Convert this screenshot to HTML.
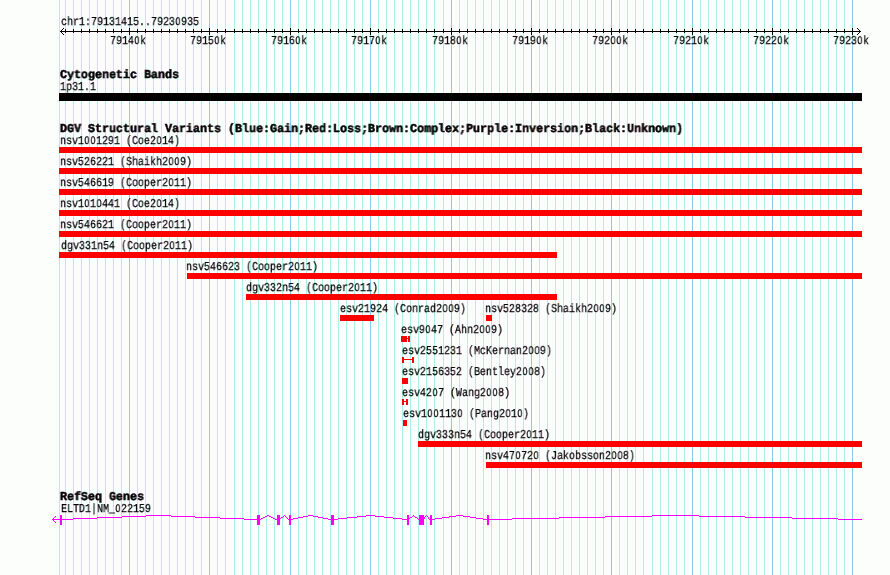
<!DOCTYPE html><html><head><meta charset="utf-8"><style>
html,body{margin:0;padding:0;width:890px;height:575px;overflow:hidden;background:#fcfefc}
svg{position:absolute;left:0;top:0}
.t{position:absolute;white-space:pre;font-family:'Liberation Mono',monospace;font-size:12px;line-height:13px;text-rendering:geometricPrecision;transform:scaleX(0.833333);transform-origin:0 0;color:#000;will-change:transform;-webkit-text-stroke:0.25px #000}
.b{position:absolute;white-space:pre;font-family:'Liberation Mono',monospace;font-weight:bold;font-size:12px;line-height:13px;text-rendering:geometricPrecision;transform:scaleX(0.972222);transform-origin:0 0;color:#000;will-change:transform;-webkit-text-stroke:0.5px #000}
.z{display:inline-block;width:7.2px;text-align:center;font-family:'Liberation Sans',sans-serif;font-size:11px;-webkit-text-stroke:0.2px #000}
</style></head><body>
<svg width="890" height="575" shape-rendering="crispEdges">
<rect x="59" y="0" width="1" height="575" fill="#afeeee"/>
<rect x="65" y="0" width="1" height="575" fill="#afeeee"/>
<rect x="73" y="0" width="1" height="575" fill="#afeeee"/>
<rect x="81" y="0" width="1" height="575" fill="#afeeee"/>
<rect x="89" y="0" width="1" height="575" fill="#afeeee"/>
<rect x="97" y="0" width="1" height="575" fill="#afeeee"/>
<rect x="105" y="0" width="1" height="575" fill="#afeeee"/>
<rect x="113" y="0" width="1" height="575" fill="#afeeee"/>
<rect x="121" y="0" width="1" height="575" fill="#afeeee"/>
<rect x="129" y="0" width="1" height="575" fill="#87ceeb"/>
<rect x="137" y="0" width="1" height="575" fill="#afeeee"/>
<rect x="145" y="0" width="1" height="575" fill="#afeeee"/>
<rect x="153" y="0" width="1" height="575" fill="#afeeee"/>
<rect x="161" y="0" width="1" height="575" fill="#afeeee"/>
<rect x="169" y="0" width="1" height="575" fill="#afeeee"/>
<rect x="177" y="0" width="1" height="575" fill="#afeeee"/>
<rect x="185" y="0" width="1" height="575" fill="#afeeee"/>
<rect x="193" y="0" width="1" height="575" fill="#afeeee"/>
<rect x="201" y="0" width="1" height="575" fill="#afeeee"/>
<rect x="209" y="0" width="1" height="575" fill="#87ceeb"/>
<rect x="217" y="0" width="1" height="575" fill="#afeeee"/>
<rect x="225" y="0" width="1" height="575" fill="#afeeee"/>
<rect x="234" y="0" width="1" height="575" fill="#afeeee"/>
<rect x="242" y="0" width="1" height="575" fill="#afeeee"/>
<rect x="250" y="0" width="1" height="575" fill="#afeeee"/>
<rect x="258" y="0" width="1" height="575" fill="#afeeee"/>
<rect x="266" y="0" width="1" height="575" fill="#afeeee"/>
<rect x="274" y="0" width="1" height="575" fill="#afeeee"/>
<rect x="282" y="0" width="1" height="575" fill="#afeeee"/>
<rect x="290" y="0" width="1" height="575" fill="#87ceeb"/>
<rect x="298" y="0" width="1" height="575" fill="#afeeee"/>
<rect x="306" y="0" width="1" height="575" fill="#afeeee"/>
<rect x="314" y="0" width="1" height="575" fill="#afeeee"/>
<rect x="322" y="0" width="1" height="575" fill="#afeeee"/>
<rect x="330" y="0" width="1" height="575" fill="#afeeee"/>
<rect x="338" y="0" width="1" height="575" fill="#afeeee"/>
<rect x="346" y="0" width="1" height="575" fill="#afeeee"/>
<rect x="354" y="0" width="1" height="575" fill="#afeeee"/>
<rect x="362" y="0" width="1" height="575" fill="#afeeee"/>
<rect x="370" y="0" width="1" height="575" fill="#87ceeb"/>
<rect x="378" y="0" width="1" height="575" fill="#afeeee"/>
<rect x="386" y="0" width="1" height="575" fill="#afeeee"/>
<rect x="394" y="0" width="1" height="575" fill="#afeeee"/>
<rect x="402" y="0" width="1" height="575" fill="#afeeee"/>
<rect x="410" y="0" width="1" height="575" fill="#afeeee"/>
<rect x="418" y="0" width="1" height="575" fill="#afeeee"/>
<rect x="426" y="0" width="1" height="575" fill="#afeeee"/>
<rect x="434" y="0" width="1" height="575" fill="#afeeee"/>
<rect x="443" y="0" width="1" height="575" fill="#afeeee"/>
<rect x="451" y="0" width="1" height="575" fill="#87ceeb"/>
<rect x="459" y="0" width="1" height="575" fill="#afeeee"/>
<rect x="467" y="0" width="1" height="575" fill="#afeeee"/>
<rect x="475" y="0" width="1" height="575" fill="#afeeee"/>
<rect x="483" y="0" width="1" height="575" fill="#afeeee"/>
<rect x="491" y="0" width="1" height="575" fill="#afeeee"/>
<rect x="499" y="0" width="1" height="575" fill="#afeeee"/>
<rect x="507" y="0" width="1" height="575" fill="#afeeee"/>
<rect x="515" y="0" width="1" height="575" fill="#afeeee"/>
<rect x="523" y="0" width="1" height="575" fill="#afeeee"/>
<rect x="531" y="0" width="1" height="575" fill="#87ceeb"/>
<rect x="539" y="0" width="1" height="575" fill="#afeeee"/>
<rect x="547" y="0" width="1" height="575" fill="#afeeee"/>
<rect x="555" y="0" width="1" height="575" fill="#afeeee"/>
<rect x="563" y="0" width="1" height="575" fill="#afeeee"/>
<rect x="571" y="0" width="1" height="575" fill="#afeeee"/>
<rect x="579" y="0" width="1" height="575" fill="#afeeee"/>
<rect x="587" y="0" width="1" height="575" fill="#afeeee"/>
<rect x="595" y="0" width="1" height="575" fill="#afeeee"/>
<rect x="603" y="0" width="1" height="575" fill="#afeeee"/>
<rect x="611" y="0" width="1" height="575" fill="#87ceeb"/>
<rect x="619" y="0" width="1" height="575" fill="#afeeee"/>
<rect x="627" y="0" width="1" height="575" fill="#afeeee"/>
<rect x="635" y="0" width="1" height="575" fill="#afeeee"/>
<rect x="643" y="0" width="1" height="575" fill="#afeeee"/>
<rect x="652" y="0" width="1" height="575" fill="#afeeee"/>
<rect x="660" y="0" width="1" height="575" fill="#afeeee"/>
<rect x="668" y="0" width="1" height="575" fill="#afeeee"/>
<rect x="676" y="0" width="1" height="575" fill="#afeeee"/>
<rect x="684" y="0" width="1" height="575" fill="#afeeee"/>
<rect x="692" y="0" width="1" height="575" fill="#87ceeb"/>
<rect x="700" y="0" width="1" height="575" fill="#afeeee"/>
<rect x="708" y="0" width="1" height="575" fill="#afeeee"/>
<rect x="716" y="0" width="1" height="575" fill="#afeeee"/>
<rect x="724" y="0" width="1" height="575" fill="#afeeee"/>
<rect x="732" y="0" width="1" height="575" fill="#afeeee"/>
<rect x="740" y="0" width="1" height="575" fill="#afeeee"/>
<rect x="748" y="0" width="1" height="575" fill="#afeeee"/>
<rect x="756" y="0" width="1" height="575" fill="#afeeee"/>
<rect x="764" y="0" width="1" height="575" fill="#afeeee"/>
<rect x="772" y="0" width="1" height="575" fill="#87ceeb"/>
<rect x="780" y="0" width="1" height="575" fill="#afeeee"/>
<rect x="788" y="0" width="1" height="575" fill="#afeeee"/>
<rect x="796" y="0" width="1" height="575" fill="#afeeee"/>
<rect x="804" y="0" width="1" height="575" fill="#afeeee"/>
<rect x="812" y="0" width="1" height="575" fill="#afeeee"/>
<rect x="820" y="0" width="1" height="575" fill="#afeeee"/>
<rect x="828" y="0" width="1" height="575" fill="#afeeee"/>
<rect x="836" y="0" width="1" height="575" fill="#afeeee"/>
<rect x="844" y="0" width="1" height="575" fill="#afeeee"/>
<rect x="852" y="0" width="1" height="575" fill="#87ceeb"/>
<rect x="60" y="31" width="801" height="1" fill="#000"/>
<rect x="61" y="30" width="1" height="3" fill="#000"/>
<rect x="62" y="29" width="1" height="1" fill="#000"/>
<rect x="62" y="33" width="1" height="1" fill="#000"/>
<rect x="63" y="28" width="1" height="1" fill="#000"/>
<rect x="63" y="34" width="1" height="1" fill="#000"/>
<rect x="859" y="30" width="1" height="3" fill="#000"/>
<rect x="858" y="29" width="1" height="1" fill="#000"/>
<rect x="858" y="33" width="1" height="1" fill="#000"/>
<rect x="857" y="28" width="1" height="1" fill="#000"/>
<rect x="857" y="34" width="1" height="1" fill="#000"/>
<rect x="65" y="29" width="1" height="4" fill="#000"/>
<rect x="73" y="29" width="1" height="4" fill="#000"/>
<rect x="81" y="29" width="1" height="4" fill="#000"/>
<rect x="89" y="29" width="1" height="4" fill="#000"/>
<rect x="97" y="29" width="1" height="4" fill="#000"/>
<rect x="105" y="29" width="1" height="4" fill="#000"/>
<rect x="113" y="29" width="1" height="4" fill="#000"/>
<rect x="121" y="29" width="1" height="4" fill="#000"/>
<rect x="129" y="28" width="1" height="7" fill="#000"/>
<rect x="137" y="29" width="1" height="4" fill="#000"/>
<rect x="145" y="29" width="1" height="4" fill="#000"/>
<rect x="153" y="29" width="1" height="4" fill="#000"/>
<rect x="161" y="29" width="1" height="4" fill="#000"/>
<rect x="169" y="29" width="1" height="4" fill="#000"/>
<rect x="177" y="29" width="1" height="4" fill="#000"/>
<rect x="185" y="29" width="1" height="4" fill="#000"/>
<rect x="193" y="29" width="1" height="4" fill="#000"/>
<rect x="201" y="29" width="1" height="4" fill="#000"/>
<rect x="209" y="28" width="1" height="7" fill="#000"/>
<rect x="217" y="29" width="1" height="4" fill="#000"/>
<rect x="225" y="29" width="1" height="4" fill="#000"/>
<rect x="234" y="29" width="1" height="4" fill="#000"/>
<rect x="242" y="29" width="1" height="4" fill="#000"/>
<rect x="250" y="29" width="1" height="4" fill="#000"/>
<rect x="258" y="29" width="1" height="4" fill="#000"/>
<rect x="266" y="29" width="1" height="4" fill="#000"/>
<rect x="274" y="29" width="1" height="4" fill="#000"/>
<rect x="282" y="29" width="1" height="4" fill="#000"/>
<rect x="290" y="28" width="1" height="7" fill="#000"/>
<rect x="298" y="29" width="1" height="4" fill="#000"/>
<rect x="306" y="29" width="1" height="4" fill="#000"/>
<rect x="314" y="29" width="1" height="4" fill="#000"/>
<rect x="322" y="29" width="1" height="4" fill="#000"/>
<rect x="330" y="29" width="1" height="4" fill="#000"/>
<rect x="338" y="29" width="1" height="4" fill="#000"/>
<rect x="346" y="29" width="1" height="4" fill="#000"/>
<rect x="354" y="29" width="1" height="4" fill="#000"/>
<rect x="362" y="29" width="1" height="4" fill="#000"/>
<rect x="370" y="28" width="1" height="7" fill="#000"/>
<rect x="378" y="29" width="1" height="4" fill="#000"/>
<rect x="386" y="29" width="1" height="4" fill="#000"/>
<rect x="394" y="29" width="1" height="4" fill="#000"/>
<rect x="402" y="29" width="1" height="4" fill="#000"/>
<rect x="410" y="29" width="1" height="4" fill="#000"/>
<rect x="418" y="29" width="1" height="4" fill="#000"/>
<rect x="426" y="29" width="1" height="4" fill="#000"/>
<rect x="434" y="29" width="1" height="4" fill="#000"/>
<rect x="443" y="29" width="1" height="4" fill="#000"/>
<rect x="451" y="28" width="1" height="7" fill="#000"/>
<rect x="459" y="29" width="1" height="4" fill="#000"/>
<rect x="467" y="29" width="1" height="4" fill="#000"/>
<rect x="475" y="29" width="1" height="4" fill="#000"/>
<rect x="483" y="29" width="1" height="4" fill="#000"/>
<rect x="491" y="29" width="1" height="4" fill="#000"/>
<rect x="499" y="29" width="1" height="4" fill="#000"/>
<rect x="507" y="29" width="1" height="4" fill="#000"/>
<rect x="515" y="29" width="1" height="4" fill="#000"/>
<rect x="523" y="29" width="1" height="4" fill="#000"/>
<rect x="531" y="28" width="1" height="7" fill="#000"/>
<rect x="539" y="29" width="1" height="4" fill="#000"/>
<rect x="547" y="29" width="1" height="4" fill="#000"/>
<rect x="555" y="29" width="1" height="4" fill="#000"/>
<rect x="563" y="29" width="1" height="4" fill="#000"/>
<rect x="571" y="29" width="1" height="4" fill="#000"/>
<rect x="579" y="29" width="1" height="4" fill="#000"/>
<rect x="587" y="29" width="1" height="4" fill="#000"/>
<rect x="595" y="29" width="1" height="4" fill="#000"/>
<rect x="603" y="29" width="1" height="4" fill="#000"/>
<rect x="611" y="28" width="1" height="7" fill="#000"/>
<rect x="619" y="29" width="1" height="4" fill="#000"/>
<rect x="627" y="29" width="1" height="4" fill="#000"/>
<rect x="635" y="29" width="1" height="4" fill="#000"/>
<rect x="643" y="29" width="1" height="4" fill="#000"/>
<rect x="652" y="29" width="1" height="4" fill="#000"/>
<rect x="660" y="29" width="1" height="4" fill="#000"/>
<rect x="668" y="29" width="1" height="4" fill="#000"/>
<rect x="676" y="29" width="1" height="4" fill="#000"/>
<rect x="684" y="29" width="1" height="4" fill="#000"/>
<rect x="692" y="28" width="1" height="7" fill="#000"/>
<rect x="700" y="29" width="1" height="4" fill="#000"/>
<rect x="708" y="29" width="1" height="4" fill="#000"/>
<rect x="716" y="29" width="1" height="4" fill="#000"/>
<rect x="724" y="29" width="1" height="4" fill="#000"/>
<rect x="732" y="29" width="1" height="4" fill="#000"/>
<rect x="740" y="29" width="1" height="4" fill="#000"/>
<rect x="748" y="29" width="1" height="4" fill="#000"/>
<rect x="756" y="29" width="1" height="4" fill="#000"/>
<rect x="764" y="29" width="1" height="4" fill="#000"/>
<rect x="772" y="28" width="1" height="7" fill="#000"/>
<rect x="780" y="29" width="1" height="4" fill="#000"/>
<rect x="788" y="29" width="1" height="4" fill="#000"/>
<rect x="796" y="29" width="1" height="4" fill="#000"/>
<rect x="804" y="29" width="1" height="4" fill="#000"/>
<rect x="812" y="29" width="1" height="4" fill="#000"/>
<rect x="820" y="29" width="1" height="4" fill="#000"/>
<rect x="828" y="29" width="1" height="4" fill="#000"/>
<rect x="836" y="29" width="1" height="4" fill="#000"/>
<rect x="844" y="29" width="1" height="4" fill="#000"/>
<rect x="852" y="28" width="1" height="7" fill="#000"/>
<rect x="59" y="93" width="803" height="8" fill="#000"/>
<rect x="59" y="147" width="803" height="6" fill="#ff0000"/>
<rect x="59" y="168" width="803" height="6" fill="#ff0000"/>
<rect x="59" y="189" width="803" height="6" fill="#ff0000"/>
<rect x="59" y="210" width="803" height="6" fill="#ff0000"/>
<rect x="59" y="231" width="803" height="6" fill="#ff0000"/>
<rect x="59" y="252" width="498" height="6" fill="#ff0000"/>
<rect x="187" y="273" width="675" height="6" fill="#ff0000"/>
<rect x="246" y="294" width="311" height="6" fill="#ff0000"/>
<rect x="340" y="315" width="34" height="6" fill="#ff0000"/>
<rect x="486" y="315" width="6" height="6" fill="#ff0000"/>
<rect x="401" y="336" width="6" height="6" fill="#ff0000"/>
<rect x="407" y="338" width="1" height="1" fill="#ff0000"/>
<rect x="408" y="336" width="2" height="6" fill="#ff0000"/>
<rect x="402" y="357" width="2" height="6" fill="#ff0000"/>
<rect x="404" y="359" width="8" height="1" fill="#ff0000"/>
<rect x="412" y="357" width="2" height="6" fill="#ff0000"/>
<rect x="402" y="378" width="6" height="6" fill="#ff0000"/>
<rect x="402" y="399" width="2" height="6" fill="#ff0000"/>
<rect x="404" y="401" width="2" height="1" fill="#ff0000"/>
<rect x="406" y="399" width="2" height="6" fill="#ff0000"/>
<rect x="403" y="420" width="4" height="6" fill="#ff0000"/>
<rect x="418" y="441" width="444" height="6" fill="#ff0000"/>
<rect x="486" y="462" width="376" height="6" fill="#ff0000"/>
<rect x="52" y="519" width="8" height="1" fill="#ff00ff"/>
<rect x="53" y="518" width="1" height="3" fill="#ff00ff"/>
<rect x="54" y="517" width="1" height="1" fill="#ff00ff"/>
<rect x="54" y="521" width="1" height="1" fill="#ff00ff"/>
<rect x="55" y="516" width="1" height="1" fill="#ff00ff"/>
<rect x="55" y="522" width="1" height="1" fill="#ff00ff"/>
<rect x="60" y="519" width="13" height="1" fill="#ff00ff"/>
<rect x="244" y="519" width="13" height="1" fill="#ff00ff"/>
<rect x="259" y="519" width="2" height="1" fill="#ff00ff"/>
<rect x="275" y="519" width="2" height="1" fill="#ff00ff"/>
<rect x="279" y="519" width="1" height="1" fill="#ff00ff"/>
<rect x="288" y="519" width="1" height="1" fill="#ff00ff"/>
<rect x="290" y="519" width="3" height="1" fill="#ff00ff"/>
<rect x="328" y="519" width="3" height="1" fill="#ff00ff"/>
<rect x="333" y="519" width="5" height="1" fill="#ff00ff"/>
<rect x="402" y="519" width="5" height="1" fill="#ff00ff"/>
<rect x="408" y="519" width="1" height="1" fill="#ff00ff"/>
<rect x="418" y="519" width="1" height="1" fill="#ff00ff"/>
<rect x="423" y="519" width="1" height="1" fill="#ff00ff"/>
<rect x="429" y="519" width="1" height="1" fill="#ff00ff"/>
<rect x="431" y="519" width="4" height="1" fill="#ff00ff"/>
<rect x="483" y="519" width="4" height="1" fill="#ff00ff"/>
<rect x="488" y="519" width="24" height="1" fill="#ff00ff"/>
<rect x="838" y="519" width="24" height="1" fill="#ff00ff"/>
<rect x="73" y="518" width="24" height="1" fill="#ff00ff"/>
<rect x="220" y="518" width="24" height="1" fill="#ff00ff"/>
<rect x="261" y="518" width="2" height="1" fill="#ff00ff"/>
<rect x="273" y="518" width="2" height="1" fill="#ff00ff"/>
<rect x="280" y="518" width="1" height="1" fill="#ff00ff"/>
<rect x="287" y="518" width="1" height="1" fill="#ff00ff"/>
<rect x="293" y="518" width="5" height="1" fill="#ff00ff"/>
<rect x="323" y="518" width="5" height="1" fill="#ff00ff"/>
<rect x="338" y="518" width="9" height="1" fill="#ff00ff"/>
<rect x="393" y="518" width="9" height="1" fill="#ff00ff"/>
<rect x="409" y="518" width="1" height="1" fill="#ff00ff"/>
<rect x="417" y="518" width="1" height="1" fill="#ff00ff"/>
<rect x="424" y="518" width="1" height="1" fill="#ff00ff"/>
<rect x="428" y="518" width="1" height="1" fill="#ff00ff"/>
<rect x="435" y="518" width="7" height="1" fill="#ff00ff"/>
<rect x="476" y="518" width="7" height="1" fill="#ff00ff"/>
<rect x="512" y="518" width="47" height="1" fill="#ff00ff"/>
<rect x="792" y="518" width="46" height="1" fill="#ff00ff"/>
<rect x="146" y="515" width="25" height="1" fill="#ff00ff"/>
<rect x="267" y="515" width="2" height="1" fill="#ff00ff"/>
<rect x="284" y="515" width="1" height="1" fill="#ff00ff"/>
<rect x="308" y="515" width="5" height="1" fill="#ff00ff"/>
<rect x="366" y="515" width="9" height="1" fill="#ff00ff"/>
<rect x="413" y="515" width="1" height="1" fill="#ff00ff"/>
<rect x="426" y="515" width="1" height="1" fill="#ff00ff"/>
<rect x="456" y="515" width="7" height="1" fill="#ff00ff"/>
<rect x="652" y="515" width="47" height="1" fill="#ff00ff"/>
<rect x="97" y="517" width="25" height="1" fill="#ff00ff"/>
<rect x="195" y="517" width="25" height="1" fill="#ff00ff"/>
<rect x="263" y="517" width="2" height="1" fill="#ff00ff"/>
<rect x="271" y="517" width="2" height="1" fill="#ff00ff"/>
<rect x="281" y="517" width="2" height="1" fill="#ff00ff"/>
<rect x="286" y="517" width="1" height="1" fill="#ff00ff"/>
<rect x="298" y="517" width="5" height="1" fill="#ff00ff"/>
<rect x="318" y="517" width="5" height="1" fill="#ff00ff"/>
<rect x="347" y="517" width="10" height="1" fill="#ff00ff"/>
<rect x="384" y="517" width="9" height="1" fill="#ff00ff"/>
<rect x="410" y="517" width="2" height="1" fill="#ff00ff"/>
<rect x="415" y="517" width="2" height="1" fill="#ff00ff"/>
<rect x="424" y="517" width="1" height="1" fill="#ff00ff"/>
<rect x="428" y="517" width="1" height="1" fill="#ff00ff"/>
<rect x="442" y="517" width="7" height="1" fill="#ff00ff"/>
<rect x="470" y="517" width="6" height="1" fill="#ff00ff"/>
<rect x="559" y="517" width="46" height="1" fill="#ff00ff"/>
<rect x="745" y="517" width="47" height="1" fill="#ff00ff"/>
<rect x="122" y="516" width="24" height="1" fill="#ff00ff"/>
<rect x="171" y="516" width="24" height="1" fill="#ff00ff"/>
<rect x="265" y="516" width="2" height="1" fill="#ff00ff"/>
<rect x="269" y="516" width="2" height="1" fill="#ff00ff"/>
<rect x="283" y="516" width="1" height="1" fill="#ff00ff"/>
<rect x="285" y="516" width="1" height="1" fill="#ff00ff"/>
<rect x="303" y="516" width="5" height="1" fill="#ff00ff"/>
<rect x="313" y="516" width="5" height="1" fill="#ff00ff"/>
<rect x="357" y="516" width="9" height="1" fill="#ff00ff"/>
<rect x="375" y="516" width="9" height="1" fill="#ff00ff"/>
<rect x="412" y="516" width="1" height="1" fill="#ff00ff"/>
<rect x="414" y="516" width="1" height="1" fill="#ff00ff"/>
<rect x="425" y="516" width="1" height="1" fill="#ff00ff"/>
<rect x="427" y="516" width="1" height="1" fill="#ff00ff"/>
<rect x="449" y="516" width="7" height="1" fill="#ff00ff"/>
<rect x="463" y="516" width="7" height="1" fill="#ff00ff"/>
<rect x="605" y="516" width="47" height="1" fill="#ff00ff"/>
<rect x="699" y="516" width="46" height="1" fill="#ff00ff"/>
<rect x="60" y="515" width="2" height="10" fill="#ff00ff"/>
<rect x="257" y="515" width="3" height="10" fill="#ff00ff"/>
<rect x="277" y="515" width="3" height="10" fill="#ff00ff"/>
<rect x="289" y="515" width="2" height="10" fill="#ff00ff"/>
<rect x="331" y="515" width="3" height="10" fill="#ff00ff"/>
<rect x="407" y="515" width="2" height="10" fill="#ff00ff"/>
<rect x="419" y="515" width="5" height="10" fill="#ff00ff"/>
<rect x="430" y="515" width="2" height="10" fill="#ff00ff"/>
<rect x="487" y="515" width="2" height="10" fill="#ff00ff"/>
</svg>
<div class="t" style="left:61px;top:16px">chr1:79131415..7923<span class="z">0</span>935</div>
<div class="t" style="left:110px;top:35px">7914<span class="z">0</span>k</div>
<div class="t" style="left:190px;top:35px">7915<span class="z">0</span>k</div>
<div class="t" style="left:271px;top:35px">7916<span class="z">0</span>k</div>
<div class="t" style="left:351px;top:35px">7917<span class="z">0</span>k</div>
<div class="t" style="left:432px;top:35px">7918<span class="z">0</span>k</div>
<div class="t" style="left:512px;top:35px">7919<span class="z">0</span>k</div>
<div class="t" style="left:592px;top:35px">792<span class="z">0</span><span class="z">0</span>k</div>
<div class="t" style="left:673px;top:35px">7921<span class="z">0</span>k</div>
<div class="t" style="left:753px;top:35px">7922<span class="z">0</span>k</div>
<div class="t" style="left:833px;top:35px">7923<span class="z">0</span>k</div>
<div class="b" style="left:60px;top:69px">Cytogenetic Bands</div>
<div class="t" style="left:60px;top:81px">1p31.1</div>
<div class="b" style="left:60px;top:123px">DGV Structural Variants (Blue:Gain;Red:Loss;Brown:Complex;Purple:Inversion;Black:Unknown)</div>
<div class="t" style="left:60px;top:135px">nsv1<span class="z">0</span><span class="z">0</span>1291 (Coe2<span class="z">0</span>14)</div>
<div class="t" style="left:60px;top:156px">nsv526221 (Shaikh2<span class="z">0</span><span class="z">0</span>9)</div>
<div class="t" style="left:60px;top:177px">nsv546619 (Cooper2<span class="z">0</span>11)</div>
<div class="t" style="left:60px;top:198px">nsv1<span class="z">0</span>1<span class="z">0</span>441 (Coe2<span class="z">0</span>14)</div>
<div class="t" style="left:60px;top:219px">nsv546621 (Cooper2<span class="z">0</span>11)</div>
<div class="t" style="left:61px;top:240px">dgv331n54 (Cooper2<span class="z">0</span>11)</div>
<div class="t" style="left:186px;top:261px">nsv546623 (Cooper2<span class="z">0</span>11)</div>
<div class="t" style="left:246px;top:282px">dgv332n54 (Cooper2<span class="z">0</span>11)</div>
<div class="t" style="left:340px;top:303px">esv21924 (Conrad2<span class="z">0</span><span class="z">0</span>9)</div>
<div class="t" style="left:401px;top:324px">esv9<span class="z">0</span>47 (Ahn2<span class="z">0</span><span class="z">0</span>9)</div>
<div class="t" style="left:402px;top:345px">esv2551231 (McKernan2<span class="z">0</span><span class="z">0</span>9)</div>
<div class="t" style="left:402px;top:366px">esv2156352 (Bentley2<span class="z">0</span><span class="z">0</span>8)</div>
<div class="t" style="left:402px;top:387px">esv42<span class="z">0</span>7 (Wang2<span class="z">0</span><span class="z">0</span>8)</div>
<div class="t" style="left:403px;top:408px">esv1<span class="z">0</span><span class="z">0</span>113<span class="z">0</span> (Pang2<span class="z">0</span>1<span class="z">0</span>)</div>
<div class="t" style="left:418px;top:429px">dgv333n54 (Cooper2<span class="z">0</span>11)</div>
<div class="t" style="left:485px;top:450px">nsv47<span class="z">0</span>72<span class="z">0</span> (Jakobsson2<span class="z">0</span><span class="z">0</span>8)</div>
<div class="t" style="left:485px;top:303px">nsv528328 (Shaikh2<span class="z">0</span><span class="z">0</span>9)</div>
<div class="b" style="left:60px;top:491px">RefSeq Genes</div>
<div class="t" style="left:61px;top:503px">ELTD1|NM_<span class="z">0</span>22159</div>
</body></html>
